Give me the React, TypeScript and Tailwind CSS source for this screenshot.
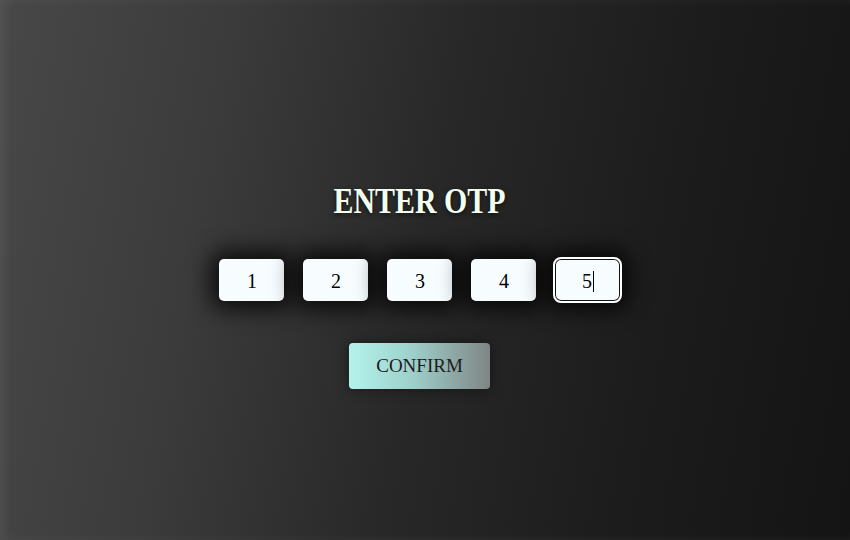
const digits = ["1", "2", "3", "4", "5"];

export default function App() {
  return (
    <div
      className="relative h-[540px] w-full overflow-hidden bg-[linear-gradient(100deg,#484848_0%,#3b3b3b_25%,#282828_50%,#1c1c1c_75%,#141414_100%)] shadow-[inset_6px_0_10px_rgba(255,255,255,0.06)]"
      style={{ fontFamily: '"Liberation Serif", "Times New Roman", serif' }}
    >
      <div className="flex flex-col items-center pt-[181px] pr-[11px]">
        <h1 className="scale-x-[0.83] text-[36px] leading-[40px] font-bold text-[#f2fff0] [text-shadow:0_2px_6px_rgba(0,0,0,0.6)]">
          ENTER OTP
        </h1>

        {/* otp boxes */}
        <div className="mt-[38px] flex gap-[19px]">
          {digits.map((d, i) => {
            const focused = i === digits.length - 1;
            return (
              <div
                key={d}
                className={
                  focused
                    ? "flex h-[42px] w-[65px] items-center justify-center rounded-[6px] bg-[#f7fcff] pt-[2px] text-[20px] text-black outline-2 outline-white shadow-[inset_0_0_0_1px_#111,0_0_22px_8px_rgba(0,0,0,0.85)]"
                    : "flex h-[42px] w-[65px] items-center justify-center rounded-[5px] bg-[#f7fcff] pt-[2px] text-[20px] text-black shadow-[0_0_22px_8px_rgba(0,0,0,0.8)]"
                }
              >
                <span className="pl-[1px]">{d}</span>
                {focused && <span className="ml-[1px] inline-block h-[21px] w-[1px] bg-black" />}
              </div>
            );
          })}
        </div>

        <button className="mt-[42px] h-[46px] w-[141px] rounded-[4px] bg-[linear-gradient(90deg,#b3f3ec_0%,#9ed0cb_45%,#7f8584_100%)] text-[19px] text-[#1c1c1c] shadow-[0_0_14px_rgba(0,0,0,0.45)]">
          CONFIRM
        </button>
      </div>
    </div>
  );
}
